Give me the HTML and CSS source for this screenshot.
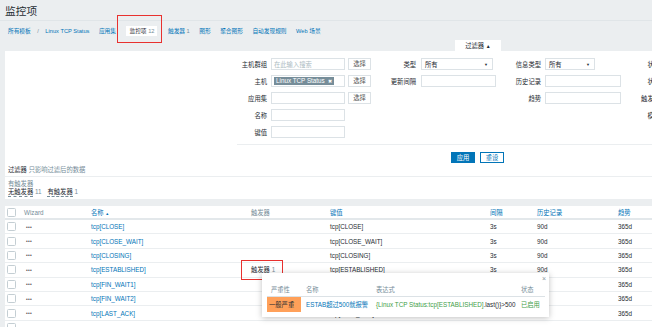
FILE: index.html
```html
<!DOCTYPE html>
<html lang="zh-CN">
<head>
    <meta charset="UTF-8">
    <title>监控项</title>
    <link rel="stylesheet" href="styles.css">
</head>
<body>
    <div class="page-title">监控项</div>

    <div class="nav">
        <a class="nav-link">所有模板</a>
        <span class="nav-sep">/</span>
        <a class="nav-link">Linux TCP Status</a>
        <a class="nav-link">应用集</a>
        <span class="nav-tab marked">监控项 <span class="count">12</span></span>
        <a class="nav-link">触发器 <span class="count">1</span></a>
        <a class="nav-link">图形</a>
        <a class="nav-link">聚合图形</a>
        <a class="nav-link">自动发现规则</a>
        <a class="nav-link">Web 场景</a>
    </div>

    <div class="filter-tabs">
        <span class="filter-tab">过滤器 <span class="arrow">▲</span></span>
    </div>

    <div class="filter-panel">
        <div class="filter-form">
            <label class="lbl">主机群组</label>
            <div class="input"><span class="placeholder">在此输入搜索</span></div>
            <span class="btn-select">选择</span>
            <label class="lbl">类型</label>
            <div class="select w72">所有<span class="caret">▼</span></div>
            <label class="lbl">信息类型</label>
            <div class="select w50">所有<span class="caret">▼</span></div>
            <label class="lbl">状态</label>

            <label class="lbl">主机</label>
            <div class="input"><span class="tag">Linux TCP Status <b>✖</b></span></div>
            <span class="btn-select">选择</span>
            <label class="lbl">更新间隔</label>
            <div class="input w75"></div>
            <label class="lbl">历史记录</label>
            <div class="input w76"></div>
            <label class="lbl">状态</label>

            <label class="lbl">应用集</label>
            <div class="input"></div>
            <span class="btn-select">选择</span>
            <span></span>
            <span></span>
            <label class="lbl">趋势</label>
            <div class="input w76"></div>
            <label class="lbl">触发器</label>

            <label class="lbl">名称</label>
            <div class="input"></div>
            <span></span><span></span><span></span><span></span><span></span>
            <label class="lbl">模板</label>

            <label class="lbl">键值</label>
            <div class="input"></div>
        </div>

        <div class="filter-buttons">
            <span class="btn btn-primary">应用</span>
            <span class="btn btn-alt">重设</span>
        </div>

        <div class="subfilter-head"><b>过滤器</b> 只影响过滤后的数据</div>
        <div class="subfilter">
            <div class="subfilter-title">有触发器</div>
            <div class="subfilter-items">
                <span><u>无触发器</u> 11</span>
                <span><u>有触发器</u> 1</span>
            </div>
        </div>
    </div>

    <div class="list">
        <div class="row head">
            <span><i class="check"></i></span>
            <span class="muted">Wizard</span>
            <span class="link">名称 <small>▲</small></span>
            <span class="muted">触发器</span>
            <span class="link">键值</span>
            <span class="link">间隔</span>
            <span class="link">历史记录</span>
            <span class="link">趋势</span>
        </div>
        <div class="row">
            <span><i class="check"></i></span><span class="dots">•••</span>
            <span class="link">tcp[CLOSE]</span><span></span>
            <span>tcp[CLOSE]</span><span>3s</span><span>90d</span><span>365d</span>
        </div>
        <div class="row">
            <span><i class="check"></i></span><span class="dots">•••</span>
            <span class="link">tcp[CLOSE_WAIT]</span><span></span>
            <span>tcp[CLOSE_WAIT]</span><span>3s</span><span>90d</span><span>365d</span>
        </div>
        <div class="row">
            <span><i class="check"></i></span><span class="dots">•••</span>
            <span class="link">tcp[CLOSING]</span><span></span>
            <span>tcp[CLOSING]</span><span>3s</span><span>90d</span><span>365d</span>
        </div>
        <div class="row">
            <span><i class="check"></i></span><span class="dots">•••</span>
            <span class="link">tcp[ESTABLISHED]</span>
            <span><span class="trigger-link marked">触发器 <span class="count">1</span></span></span>
            <span>tcp[ESTABLISHED]</span><span>3s</span><span>90d</span><span>365d</span>
        </div>
        <div class="row">
            <span><i class="check"></i></span><span class="dots">•••</span>
            <span class="link">tcp[FIN_WAIT1]</span><span></span>
            <span>tcp[FIN_WAIT1]</span><span>3s</span><span>90d</span><span>365d</span>
        </div>
        <div class="row">
            <span><i class="check"></i></span><span class="dots">•••</span>
            <span class="link">tcp[FIN_WAIT2]</span><span></span>
            <span>tcp[FIN_WAIT2]</span><span>3s</span><span>90d</span><span>365d</span>
        </div>
        <div class="row">
            <span><i class="check"></i></span><span class="dots">•••</span>
            <span class="link">tcp[LAST_ACK]</span><span></span>
            <span>tcp[LAST_ACK]</span><span>3s</span><span>90d</span><span>365d</span>
        </div>
        <div class="row row-cut">
            <span><i class="check"></i></span>
        </div>

        <!-- 触发器弹出框 -->
        <div class="popup">
            <span class="popup-close">×</span>
            <div class="popup-row popup-head">
                <span>严重性</span>
                <span>名称</span>
                <span>表达式</span>
                <span>状态</span>
            </div>
            <div class="popup-row">
                <span class="sev">一般严重</span>
                <span class="link">ESTAB超过500就报警</span>
                <span><span class="green">{Linux TCP Status:tcp[ESTABLISHED]</span>.last()}&gt;500</span>
                <span class="green">已启用</span>
            </div>
        </div>
    </div>
</body>
</html>
```

FILE: styles.css
```css
* {
    box-sizing: border-box;
    margin: 0;
    padding: 0;
}
html, body {
    overflow: hidden;
}
body {
    font-family: 'Liberation Sans', 'Noto Sans CJK SC', sans-serif;
    font-size: 6.3px;
    color: #1f2c33;
    background-color: #ebeef0;
    width: 652px;
    height: 327px;
}
a {
    color: #0275b8;
}
.link {
    color: #0275b8;
}
.muted {
    color: #768d99;
}
.green {
    color: #429e47;
}

/* 標題與導航 */
.page-title {
    height: 21px;
    padding-left: 5px;
    font-size: 10.7px;
    line-height: 22px;
    color: #1f2c33;
    border-bottom: 1px solid #e0e5e8;
}
.nav {
    display: flex;
    align-items: center;
    height: 19px;
    padding-left: 8px;
    gap: 9.5px;
    font-size: 5.7px;
}
.nav-sep {
    color: #768d99;
    margin: 0 -3px;
}
.nav-tab {
    background-color: #fff;
    padding: 1px 3px;
    margin: 0 1px;
    line-height: 8px;
}
.marked {
    position: relative;
}
.marked::after {
    content: '';
    position: absolute;
    border: 1.5px solid #e8312f;
}
.nav-tab.marked::after {
    left: -9px;
    right: -5px;
    top: -11px;
    bottom: -7px;
}

/* 過濾器 */
.filter-tabs {
    height: 11px;
    padding-left: 455px;
}
.filter-tab {
    display: inline-block;
    width: 46px;
    height: 11px;
    line-height: 11px;
    text-align: center;
    background-color: #fff;
}
.filter-tab .arrow {
    font-size: 5px;
}
.filter-panel {
    margin-left: 5px;
    background-color: #fff;
    height: 148px;
}
.filter-form {
    margin-left: 232px;
    padding-top: 4.5px;
    padding-bottom: 3.5px;
    border-bottom: 1px solid #ebeef0;
    display: grid;
    grid-template-columns: 30px 78px 26px 45px 80px 45px 80px 39px;
    grid-auto-rows: 17px;
    align-items: center;
    width: 423px;
}
.lbl {
    text-align: right;
    color: #1f2c33;
    white-space: nowrap;
}
.input, .select {
    height: 12px;
    border: 1px solid #dce2e6;
    background-color: #fff;
    margin-left: 4px;
    width: 74px;
    display: flex;
    align-items: center;
    padding-left: 2px;
}
.placeholder {
    color: #acbbc2;
}
.tag {
    background-color: #768d99;
    color: #fff;
    padding: 0 2px;
    line-height: 8px;
    white-space: nowrap;
}
.tag b {
    font-size: 5px;
    font-weight: normal;
    margin-left: 1px;
}
.select {
    position: relative;
    margin-left: 5px;
    padding-left: 3px;
}
.caret {
    position: absolute;
    right: 4px;
    font-size: 4px;
}
.w72 { width: 72px; }
.w50 { width: 50px; margin-left: 4px; }
.w75 { width: 75px; margin-left: 5px; }
.w76 { width: 76px; margin-left: 4px; }
.btn-select {
    margin-left: 3px;
    width: 23px;
    height: 12px;
    line-height: 10px;
    text-align: center;
    border: 1px solid #dce2e6;
    color: #555;
}
.filter-buttons {
    display: flex;
    gap: 5px;
    padding-left: 446px;
    padding-top: 6.5px;
    height: 18.5px;
}
.btn {
    display: inline-block;
    width: 24px;
    height: 11.5px;
    line-height: 10px;
    text-align: center;
    border: 1px solid #0275b8;
}
.btn-primary {
    background-color: #0275b8;
    color: #fff;
}
.btn-alt {
    background-color: #fff;
    color: #0275b8;
}
.subfilter-head {
    padding: 0 3px;
    height: 13.5px;
    line-height: 12px;
    color: #768d99;
    border-bottom: 1px solid #ebeef0;
}
.subfilter-head b {
    font-weight: normal;
    color: #1f2c33;
}
.subfilter {
    padding: 3px 3px 0;
    line-height: 8px;
}
.subfilter-title {
    color: #768d99;
    height: 8px;
}
.subfilter-items {
    display: flex;
    gap: 6px;
    height: 9px;
    align-items: center;
}
.subfilter-items span {
    color: #768d99;
}
.subfilter-items u {
    display: inline-block;
    line-height: 6.5px;
    text-decoration: none;
    border-bottom: 1px dashed #768d99;
    color: #1f2c33;
}

/* 列表 */
.list {
    position: relative;
    margin: 7px 0 0 5px;
    background-color: #fff;
}
.row {
    display: grid;
    grid-template-columns: 17px 67px 160px 79px 160px 47px 81px 1fr;
    align-items: center;
    height: 14.4px;
    padding-left: 2px;
    border-bottom: 1px solid #ebeef0;
    white-space: nowrap;
}
.row.head {
    height: 14px;
    border-bottom: 2px solid #e3e8eb;
}
.row.head small {
    font-size: 4px;
}
.row-cut {
    align-items: start;
    padding-top: 2px;
}
.check {
    display: block;
    width: 9px;
    height: 9px;
    border: 1px solid #c4ced3;
    border-radius: 1.5px;
}
.dots {
    padding-left: 2px;
    font-size: 5px;
    letter-spacing: 0.3px;
    color: #555;
}
.trigger-link {
    display: inline-block;
}
.trigger-link.marked::after {
    left: -10px;
    right: -8px;
    top: -5px;
    bottom: -6px;
}
.trigger-link .count,
.nav .count {
    color: #768d99;
}

/* 彈出框 */
.popup {
    position: absolute;
    left: 257px;
    top: 67px;
    width: 287px;
    height: 44px;
    background-color: #fff;
    box-shadow: 0 1px 6px rgba(0, 0, 0, 0.25);
    padding: 10px 4px 0 5px;
}
.popup-close {
    position: absolute;
    right: 3px;
    top: 2px;
    color: #8a9aa3;
    font-size: 7px;
}
.popup-row {
    display: grid;
    grid-template-columns: 39px 70px 145px 1fr;
    align-items: center;
    white-space: nowrap;
}
.popup-head {
    height: 14px;
    color: #768d99;
    border-bottom: 1px solid #dce2e6;
}
.popup-head span:first-child {
    padding-left: 4px;
}
.popup-row:not(.popup-head) {
    height: 15px;
}
.sev {
    background-color: #ffa059;
    align-self: stretch;
    display: flex;
    align-items: center;
    padding-left: 2px;
    width: 34px;
}
```
